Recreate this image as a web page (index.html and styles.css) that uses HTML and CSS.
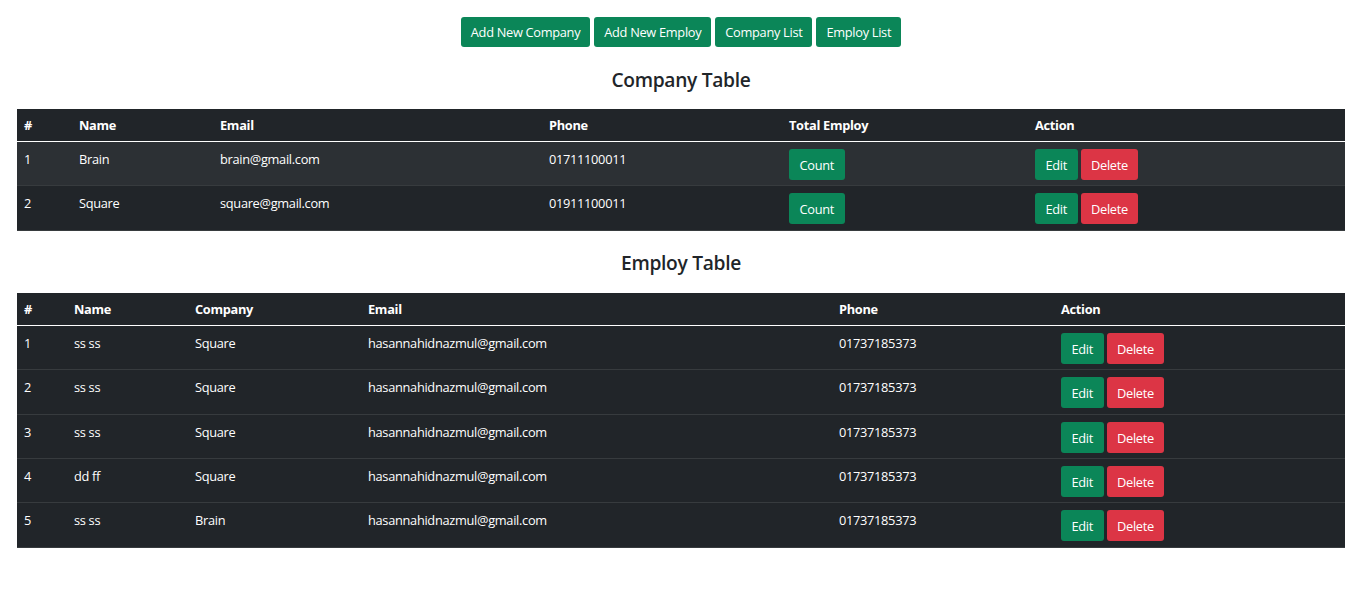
FILE: index.html
```html
<!DOCTYPE html>
<html lang="en">
<head>
<meta charset="utf-8">
<title>Company &amp; Employ</title>
<link rel="stylesheet" href="styles.css">
</head>
<body>
<div class="page">
  <nav class="actions">
    <a class="btn btn-success" href="#">Add New Company</a>
    <a class="btn btn-success" href="#">Add New Employ</a>
    <a class="btn btn-success" href="#">Company List</a>
    <a class="btn btn-success" href="#">Employ List</a>
  </nav>

  <h4 class="title">Company Table</h4>
  <table class="table table-striped company">
    <colgroup>
      <col class="c1"><col class="c2"><col class="c3"><col class="c4"><col class="c5"><col>
    </colgroup>
    <thead>
      <tr><th>#</th><th>Name</th><th>Email</th><th>Phone</th><th>Total Employ</th><th>Action</th></tr>
    </thead>
    <tbody>
      <tr>
        <td>1</td><td>Brain</td><td>brain@gmail.com</td><td>01711100011</td>
        <td><div class="row-actions"><a class="btn btn-success btn-row" href="#">Count</a></div></td>
        <td><div class="row-actions"><a class="btn btn-success btn-row" href="#">Edit</a><a class="btn btn-danger btn-row" href="#">Delete</a></div></td>
      </tr>
      <tr>
        <td>2</td><td>Square</td><td>square@gmail.com</td><td>01911100011</td>
        <td><div class="row-actions"><a class="btn btn-success btn-row" href="#">Count</a></div></td>
        <td><div class="row-actions"><a class="btn btn-success btn-row" href="#">Edit</a><a class="btn btn-danger btn-row" href="#">Delete</a></div></td>
      </tr>
    </tbody>
  </table>

  <h4 class="title">Employ Table</h4>
  <table class="table employ">
    <colgroup>
      <col class="c1"><col class="c2"><col class="c3"><col class="c4"><col class="c5"><col>
    </colgroup>
    <thead>
      <tr><th>#</th><th>Name</th><th>Company</th><th>Email</th><th>Phone</th><th>Action</th></tr>
    </thead>
    <tbody>
      <tr><td>1</td><td>ss ss</td><td>Square</td><td>hasannahidnazmul@gmail.com</td><td>01737185373</td>
        <td><div class="row-actions"><a class="btn btn-success btn-row" href="#">Edit</a><a class="btn btn-danger btn-row" href="#">Delete</a></div></td></tr>
      <tr><td>2</td><td>ss ss</td><td>Square</td><td>hasannahidnazmul@gmail.com</td><td>01737185373</td>
        <td><div class="row-actions"><a class="btn btn-success btn-row" href="#">Edit</a><a class="btn btn-danger btn-row" href="#">Delete</a></div></td></tr>
      <tr><td>3</td><td>ss ss</td><td>Square</td><td>hasannahidnazmul@gmail.com</td><td>01737185373</td>
        <td><div class="row-actions"><a class="btn btn-success btn-row" href="#">Edit</a><a class="btn btn-danger btn-row" href="#">Delete</a></div></td></tr>
      <tr><td>4</td><td>dd ff</td><td>Square</td><td>hasannahidnazmul@gmail.com</td><td>01737185373</td>
        <td><div class="row-actions"><a class="btn btn-success btn-row" href="#">Edit</a><a class="btn btn-danger btn-row" href="#">Delete</a></div></td></tr>
      <tr><td>5</td><td>ss ss</td><td>Brain</td><td>hasannahidnazmul@gmail.com</td><td>01737185373</td>
        <td><div class="row-actions"><a class="btn btn-success btn-row" href="#">Edit</a><a class="btn btn-danger btn-row" href="#">Delete</a></div></td></tr>
    </tbody>
  </table>
</div>
</body>
</html>
```

FILE: styles.css
```css
* { box-sizing: border-box; }

html, body {
  margin: 0;
  padding: 0;
  background: #fff;
}

body {
  font-family: "Open Sans", "Noto Sans", "Liberation Sans", sans-serif;
  font-size: 12.8px;
  line-height: 19px;
  letter-spacing: -0.3px;
  color: #212529;
}

.page {
  padding: 17px 9px 0 17px;
}

.actions {
  display: flex;
  justify-content: center;
  gap: 4px;
}

.btn {
  display: inline-block;
  text-decoration: none;
  color: #fff;
  font-size: 12.8px;
  line-height: 20px;
  padding: 5px 10px;
  border-radius: 3px;
  white-space: nowrap;
}

.btn-success { background: #0b8658; }
.btn-danger { background: #dc3545; }

.btn-row {
  padding: 6px 10.5px 5px;
}

.row-actions {
  display: flex;
  gap: 3px;
}

.title {
  margin: 21px 0 18px;
  text-align: center;
  font-size: 19.2px;
  line-height: 23px;
  font-weight: 600;
  color: #212529;
}

.table + .title {
  margin: 20px 0 19px;
}

.table {
  width: 100%;
  table-layout: fixed;
  border-collapse: collapse;
  background: #212529;
  color: #fff;
  margin: 0;
}

.table th,
.table td {
  text-align: left;
  vertical-align: top;
}

.table th {
  font-weight: 700;
  padding: 7px 7px 6px;
}

.table thead tr {
  border-bottom: 1px solid #fff;
}

.table tbody td {
  padding: 7px 7px 5.4px;
  line-height: 20px;
}

.table tbody tr {
  border-bottom: 1px solid #373b3e;
}

.table-striped tbody tr:nth-child(odd) {
  background: #2c3034;
}

.company col.c1 { width: 55px; }
.company col.c2 { width: 141px; }
.company col.c3 { width: 329px; }
.company col.c4 { width: 240px; }
.company col.c5 { width: 246px; }

.employ col.c1 { width: 50px; }
.employ col.c2 { width: 121px; }
.employ col.c3 { width: 173px; }
.employ col.c4 { width: 471px; }
.employ col.c5 { width: 222px; }
```
